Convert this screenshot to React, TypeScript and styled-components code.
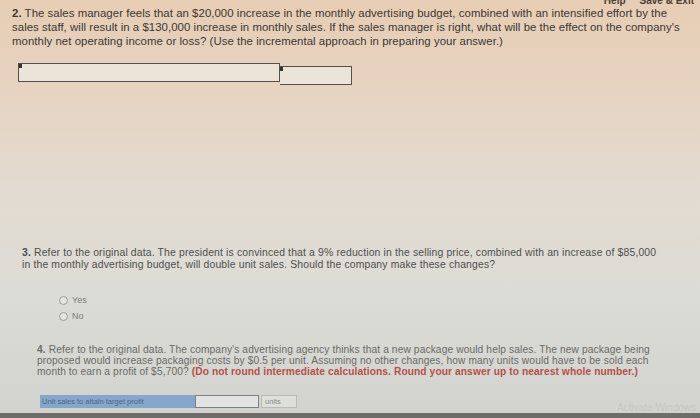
import React from "react";
import styled, { createGlobalStyle } from "styled-components";

const Global = createGlobalStyle`
  html, body { margin: 0; padding: 0; }
  body {
    width: 700px;
    height: 418px;
    overflow: hidden;
    font-family: "Liberation Sans", Arial, sans-serif;
  }
`;

const Page = styled.div`
  position: relative;
  width: 700px;
  height: 418px;
  display: flex;
  flex-direction: column;
  overflow: hidden;
  background: linear-gradient(
    180deg,
    #e7cdb4 0%,
    #e6d3c0 20%,
    #e3dbd1 45%,
    #dcdcd6 70%,
    #d2d3ce 100%
  );
`;

const TopBar = styled.div`
  height: 6px;
  overflow: hidden;
  display: flex;
  justify-content: flex-end;
  align-items: flex-end;
  gap: 14px;
  padding-right: 6px;
  font-size: 10px;
  line-height: 10px;
  color: #4a4038;
  font-weight: 700;
`;

const Question = styled.div<{ $size: number; $left: number; $lh: number; $color: string; $ls: number }>`
  padding-left: ${(p) => p.$left}px;
  font-size: ${(p) => p.$size}px;
  line-height: ${(p) => p.$lh}px;
  color: ${(p) => p.$color};
  letter-spacing: ${(p) => p.$ls}px;
`;

const Line = styled.span`
  display: block;
  white-space: nowrap;
`;

const Num = styled.b`
  font-weight: 700;
`;

const Red = styled.b`
  color: #b4504c;
  font-weight: 700;
  letter-spacing: 0.1px;
`;

const AnswerTable = styled.div`
  display: flex;
  margin: 14px 0 0 18px;
`;

const Cell = styled.div<{ $w: number }>`
  width: ${(p) => p.$w}px;
  height: 17px;
  border: 1.5px solid #555049;
  background: #ece3d9;
  position: relative;
  & + & {
    border-left: none;
    margin-top: 3px;
  }
  &::before {
    content: "";
    position: absolute;
    left: 0;
    top: 0;
    width: 3px;
    height: 4px;
    background: #333;
  }
`;

const Radios = styled.div`
  display: flex;
  flex-direction: column;
  gap: 4px;
  margin: 22px 0 0 59px;
`;

const RadioRow = styled.label`
  display: flex;
  align-items: center;
  gap: 4px;
  font-size: 9px;
  line-height: 12px;
  color: #7a7a78;
`;

const Circle = styled.span`
  width: 7px;
  height: 7px;
  border-radius: 50%;
  border: 1px solid #9a9b98;
  background: #e4e5e1;
`;

const InputRow = styled.div`
  display: flex;
  margin: 17px 0 0 40px;
  height: 13px;
`;

const Label = styled.div`
  width: 155px;
  background: #86a7cc;
  color: #4d6585;
  font-size: 7.5px;
  line-height: 13px;
  padding-left: 2px;
  box-sizing: border-box;
`;

const Input = styled.div`
  width: 64px;
  border: 1px solid #7c8088;
  background: #e3e4e1;
  box-sizing: border-box;
`;

const Units = styled.div`
  margin-left: 2px;
  width: 36px;
  border: 1px solid #b9bab6;
  background: #dedfdb;
  color: #8a8b88;
  font-size: 7.5px;
  line-height: 11px;
  padding-left: 3px;
  box-sizing: border-box;
`;

const Watermark = styled.div`
  position: absolute;
  right: 4px;
  bottom: 5px;
  font-size: 10px;
  color: #c6c8c3;
`;

const Spacer = styled.div<{ $h: number }>`
  height: ${(p) => p.$h}px;
  flex-shrink: 0;
`;

const BottomStrip = styled.div`
  margin-top: auto;
  height: 5px;
  background: #6e6d69;
`;

export default function App() {
  return (
    <>
      <Global />
      <Page>
        <TopBar>
          <span>Help</span>
          <span>Save &amp; Exit</span>
        </TopBar>
        <Question $size={11.4} $left={12} $lh={14.2} $color="#3b3733" $ls={0.05}>
          <Line>
            <Num>2.</Num> The sales manager feels that an $20,000 increase in the monthly advertising budget, combined with an intensified effort by the
          </Line>
          <Line>sales staff, will result in a $130,000 increase in monthly sales. If the sales manager is right, what will be the effect on the company's</Line>
          <Line>monthly net operating income or loss? (Use the incremental approach in preparing your answer.)</Line>
        </Question>
        <AnswerTable>
          <Cell $w={260} />
          <Cell $w={71} />
        </AnswerTable>
        <Spacer $h={162} />
        <Question $size={10.4} $left={22} $lh={12.8} $color="#4f4f4d" $ls={0.15}>
          <Line>
            <Num>3.</Num> Refer to the original data. The president is convinced that a 9% reduction in the selling price, combined with an increase of $85,000
          </Line>
          <Line>in the monthly advertising budget, will double unit sales. Should the company make these changes?</Line>
        </Question>
        <Radios>
          <RadioRow>
            <Circle />
            Yes
          </RadioRow>
          <RadioRow>
            <Circle />
            No
          </RadioRow>
        </Radios>
        <Spacer $h={23} />
        <Question $size={10.2} $left={37} $lh={10.9} $color="#6a6a68" $ls={0.12}>
          <Line>
            <Num>4.</Num> Refer to the original data. The company's advertising agency thinks that a new package would help sales. The new package being
          </Line>
          <Line>proposed would increase packaging costs by $0.5 per unit. Assuming no other changes, how many units would have to be sold each</Line>
          <Line>
            month to earn a profit of $5,700? <Red>(Do not round intermediate calculations. Round your answer up to nearest whole number.)</Red>
          </Line>
        </Question>
        <InputRow>
          <Label>Unit sales to attain target profit</Label>
          <Input />
          <Units>units</Units>
        </InputRow>
        <Watermark>Activate Windows</Watermark>
        <BottomStrip />
      </Page>
    </>
  );
}
